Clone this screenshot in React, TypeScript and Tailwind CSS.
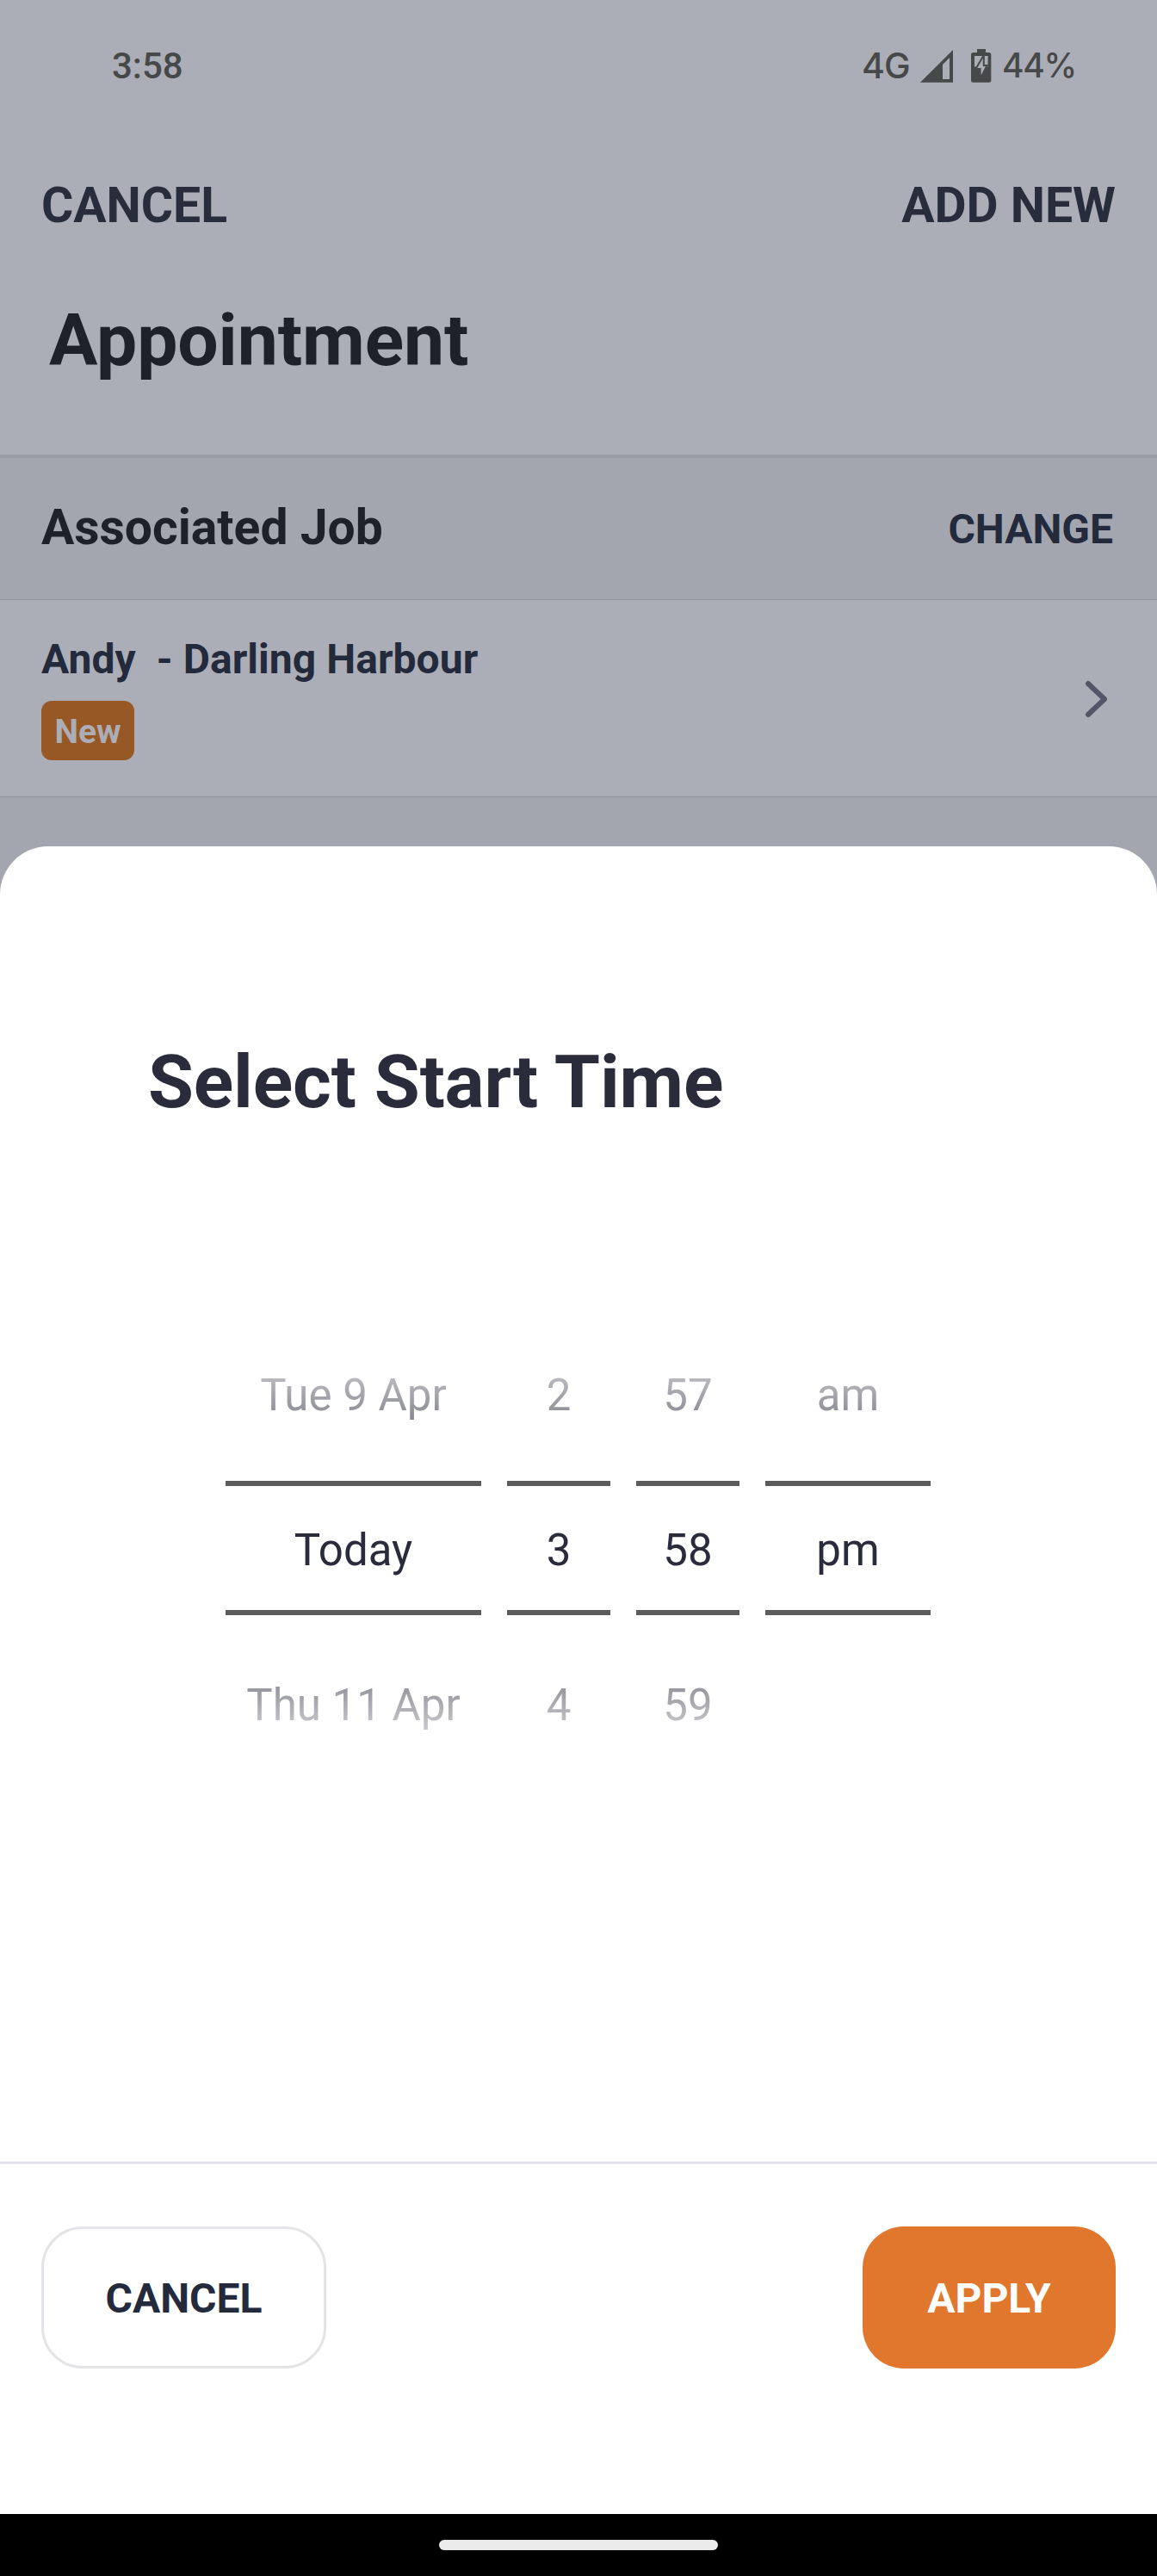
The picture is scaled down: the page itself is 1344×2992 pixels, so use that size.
type Column = {
  width: string;
  previous: string;
  selected: string;
  next: string;
};

const columns: Column[] = [
  { width: 'w-[297px]', previous: 'Tue 9 Apr', selected: 'Today', next: 'Thu 11 Apr' },
  { width: 'w-[120px]', previous: '2', selected: '3', next: '4' },
  { width: 'w-[120px]', previous: '57', selected: '58', next: '59' },
  { width: 'w-[192px]', previous: 'am', selected: 'pm', next: '' },
];

function SignalIcon() {
  return (
    <svg width="38" height="38" viewBox="0 0 38 38" fill="#464849" className="shrink-0">
      <path fillRule="evenodd" d="M0 37.7 38 0V37.7ZM26 34H34V9L26 17Z" />
    </svg>
  );
}

function BatteryIcon() {
  return (
    <svg width="24" height="39" viewBox="0 0 24 39" fill="#464849" className="shrink-0">
      <rect x="7" y="0" width="10" height="6" />
      <rect x="0" y="4" width="23.3" height="34.7" rx="2.5" />
      <rect x="4" y="8" width="15.6" height="12.5" fill="#abaeb6" />
      <path d="M14.8 7 5.5 23H10.6V34.5L18.6 19H14.8Z" fill="#abaeb6" stroke="#464849" strokeWidth="2" />
      <rect x="4" y="4.5" width="15.6" height="3.5" />
    </svg>
  );
}

function StatusBar() {
  return (
    <div className="flex h-[153px] items-center justify-between pr-[93px] pl-[130px] text-[42px] font-medium text-[#464849]">
      <span>3:58</span>
      <div className="flex items-center font-['Inter',sans-serif] text-[41px]">
        <span className="w-[68px] tracking-[-0.8px]">4G</span>
        <SignalIcon />
        <span className="ml-[21px]">
          <BatteryIcon />
        </span>
        <span className="ml-[12px] w-[87px] text-[39px] tracking-[-1.3px]">44%</span>
      </div>
    </div>
  );
}

function Picker() {
  return (
    <div className="mt-[224px] ml-[262px] flex gap-[30px] text-center text-[51px] leading-[60px] text-[#2b2c3b]">
      {columns.map((column) => (
        <div key={column.selected} className={column.width}>
          <div className="flex h-[190px] items-center justify-center pb-[9px] whitespace-nowrap [mask-image:linear-gradient(to_bottom,transparent,rgba(0,0,0,0.9))]">
            {column.previous}
          </div>
          <div className="flex h-[156px] items-center justify-center border-y-6 border-[#5c5c5d] pt-[5px]">
            {column.selected}
          </div>
          <div className="flex h-[194px] items-center justify-center pt-[15px] whitespace-nowrap [mask-image:linear-gradient(to_bottom,rgba(0,0,0,0.9),transparent_185px)]">
            {column.next}
          </div>
        </div>
      ))}
    </div>
  );
}

export default function App() {
  return (
    <div className="flex h-[2992px] w-[1344px] flex-col overflow-hidden bg-[#a3a6ae] font-['Roboto',sans-serif]">
      <header className="h-[528px] bg-[#abaeb6]">
        <StatusBar />
        <div className="flex h-[170px] items-center justify-between px-[48px] pt-[2px] text-[57px] font-bold text-[#272d3b]">
          <span>CANCEL</span>
          <span>ADD NEW</span>
        </div>
        <h1 className="flex h-[145px] items-center pl-[57px] text-[84px] font-bold tracking-[-0.1px] text-[#1e2129]">
          Appointment
        </h1>
      </header>

      <div className="flex h-[169px] items-center justify-between border-t-4 border-b border-t-[#999ca4] border-b-[#9396a0] px-[48px]">
        <h2 className="pb-[3px] text-[57px] font-bold text-[#1e2129]">Associated Job</h2>
        <span className="pt-px pr-[3px] text-[48px] font-bold text-[#232a3c]">CHANGE</span>
      </div>

      <div className="flex h-[229px] justify-between border-b border-[#9396a0] bg-[#abaeb6] pr-[58px] pl-[48px]">
        <div className="pt-[42px]">
          <div className="text-[48px] leading-[54px] font-bold tracking-[0.05px] whitespace-pre text-[#232a3c]">{'Andy  - Darling Harbour'}</div>
          <div className="mt-[21px] flex h-[69px] w-[108px] items-center justify-center rounded-[12px] bg-[#975826] pt-[2px] text-[39px] leading-[48px] font-bold text-[#abaeb6]">
            New
          </div>
        </div>
        <svg width="26" height="44" viewBox="0 0 26 44" fill="none" className="mt-[93px]">
          <path d="M4 4 23 22 4 40" stroke="#535666" strokeWidth="6" strokeLinecap="round" strokeLinejoin="round" />
        </svg>
      </div>

      <main className="mt-[57px] flex h-[1937px] flex-col rounded-t-[56px] bg-white">
        <h2 className="mt-[224px] ml-[172px] -mb-px text-[86px] leading-[100px] font-bold tracking-[-0.15px] text-[#2b2c3b]">
          Select Start Time
        </h2>
        <Picker />
        <div className="mt-auto h-[410px]">
          <div className="h-[4px] border-y border-[#f0f0f4] bg-[#e3e3e9]" />
          <div className="mt-[72px] flex items-center justify-between px-[48px] text-[48px] font-bold">
            <button className="h-[165px] w-[331px] rounded-[48px] border-3 border-[#e3e3e8] pt-[2px] text-[#232a3c]">CANCEL</button>
            <button className="h-[165px] w-[294px] rounded-[48px] bg-[#e0772d] pt-[2px] text-white">APPLY</button>
          </div>
        </div>
      </main>

      <footer className="flex h-[72px] items-center justify-center bg-black">
        <div className="h-[12px] w-[324px] rounded-full bg-[#ebebeb]" />
      </footer>
    </div>
  );
}
